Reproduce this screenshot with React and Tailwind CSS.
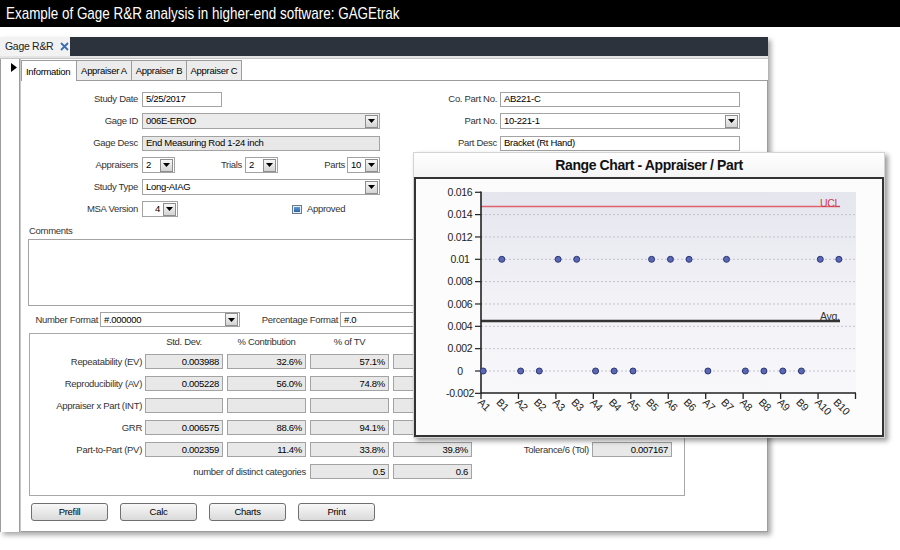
import React from 'react';

const Tri = () => (
  <svg width="7" height="4" viewBox="0 0 7 4"><path d="M0 0H7L3.5 4Z" fill="#000" /></svg>
);

function DropBtn() {
  return (
    <div className="w-[13px] h-[13px] mr-[1px] border border-[#8e8e8e] bg-gradient-to-b from-[#f7f7f7] to-[#d4d4d4] flex items-center justify-center shrink-0">
      <Tri />
    </div>
  );
}

function Field({ cls = '', v = '', grey = false, right = false }) {
  return (
    <div className={`h-[15px] border border-[#a3a3a3] ${grey ? 'bg-[#e8e8e8]' : 'bg-white'} flex items-center px-[3px] ${right ? 'justify-end' : ''} text-black overflow-hidden whitespace-nowrap shrink-0 ${cls}`}>
      {v}
    </div>
  );
}

function Select({ cls = '', v = '', grey = false, right = false }) {
  return (
    <div className={`h-[16px] border border-[#a3a3a3] ${grey ? 'bg-[#ebebeb]' : 'bg-white'} flex items-center shrink-0 ${cls}`}>
      <div className={`flex-1 px-[3px] text-black whitespace-nowrap overflow-hidden ${right ? 'text-right' : ''}`}>{v}</div>
      <DropBtn />
    </div>
  );
}

function Label({ cls = '', children }) {
  return <div className={`text-right text-[#333] whitespace-nowrap shrink-0 ${cls}`}>{children}</div>;
}

function Btn({ children }) {
  return (
    <div className="w-[77px] h-[18px] border border-[#707070] rounded-[3px] bg-gradient-to-b from-[#f8f8f8] to-[#dadada] flex items-center justify-center text-black shrink-0">
      {children}
    </div>
  );
}

const rows = [
  ['Repeatability (EV)', '0.003988', '32.6%', '57.1%'],
  ['Reproducibility (AV)', '0.005228', '56.0%', '74.8%'],
  ['Appraiser x Part (INT)', '', '', ''],
  ['GRR', '0.006575', '88.6%', '94.1%'],
];

function Chart() {
  const yv = (v) => 371 - v * 11170;
  const ticks = [
    [0.016, '0.016'], [0.014, '0.014'], [0.012, '0.012'], [0.01, '0.01'], [0.008, '0.008'],
    [0.006, '0.006'], [0.004, '0.004'], [0.002, '0.002'], [0, '0'], [-0.002, '-0.002'],
  ];
  const vals = [0, 0.01, 0, 0, 0.01, 0.01, 0, 0, 0, 0.01, 0.01, 0.01, 0, 0.01, 0, 0, 0, 0, 0.01, 0.01];
  const tx = (i) => 481 + i * 37.45;
  const pts = [];
  for (let i = 0; i < 10; i++) {
    pts.push({ x: tx(i) + 2.2, v: vals[i * 2], l: 'A' + (i + 1) });
    pts.push({ x: tx(i) + 20.8, v: vals[i * 2 + 1], l: 'B' + (i + 1) });
  }
  return (
    <svg width="466" height="256" className="absolute left-0 top-0" fontFamily="'Liberation Sans', Arial, sans-serif">
      <defs>
        <linearGradient id="pg" x1="0" y1="0" x2="0" y2="1">
          <stop offset="0" stopColor="#e5e5ee" />
          <stop offset="0.5" stopColor="#f1f1f6" />
          <stop offset="1" stopColor="#f8f8fb" />
        </linearGradient>
      </defs>
      <g transform="translate(-416,-179)">
        <rect x="481" y="192" width="375" height="201" fill="url(#pg)" />
        {ticks.slice(1, 9).map(([v]) => (
          <line key={v} x1="481" x2="856" y1={yv(v)} y2={yv(v)} stroke="#c2c2cc" strokeWidth="1" strokeDasharray="2 2" />
        ))}
        {ticks.map(([v, t]) => (
          <g key={t}>
            <text x="460" y={yv(v) + 3.8} fontSize="10.5" textAnchor="middle" fill="#222">{t}</text>
            <line x1="475" x2="481" y1={yv(v)} y2={yv(v)} stroke="#222" strokeWidth="1.2" />
          </g>
        ))}
        <line x1="481" x2="840" y1="206.5" y2="206.5" stroke="#e0606e" strokeWidth="1.6" />
        <text x="820" y="207" fontSize="10.5" fill="#d03c4c">UCL</text>
        <line x1="481" x2="840" y1="321" y2="321" stroke="#333" strokeWidth="2.4" />
        <text x="820" y="319.5" fontSize="10.5" fill="#333">Avg.</text>
        <line x1="481" x2="481" y1="191.5" y2="393.5" stroke="#222" strokeWidth="1.6" />
        <line x1="481" x2="856" y1="393" y2="393" stroke="#222" strokeWidth="1.6" />
        {Array.from({ length: 11 }).map((_, i) => (
          <line key={i} x1={tx(i)} x2={tx(i)} y1="393" y2="399" stroke="#222" strokeWidth="1.3" />
        ))}
        {pts.map((p) => (
          <circle key={p.l} cx={p.x} cy={yv(p.v)} r="3" fill="#5a68b4" stroke="#2c3778" strokeWidth="1" />
        ))}
        {pts.map((p) => (
          <text key={'t' + p.l} x={p.x - 6} y="403" fontSize="10.5" fill="#222" transform={`rotate(45 ${p.x - 6} 403)`}>{p.l}</text>
        ))}
      </g>
    </svg>
  );
}

export default function App() {
  return (
    <div className="w-[900px] h-[550px] bg-white overflow-hidden relative font-['Liberation_Sans',Arial,sans-serif] text-[9.5px] tracking-[-0.3px] leading-none">
      {/* Title bar */}
      <div className="h-[27px] bg-black flex items-center pl-[6px] overflow-hidden">
        <span className="inline-block text-white text-[17px] tracking-normal whitespace-nowrap origin-left scale-x-[0.79]">
          Example of Gage R&amp;R analysis in higher-end software: GAGEtrak
        </span>
      </div>

      {/* Window */}
      <div className="mt-[10px] w-[768px] h-[495px] flex flex-col bg-white shadow-[3px_3px_5px_rgba(0,0,0,0.35)]">
        <div className="h-[19px] bg-[#2d333c] flex items-end shrink-0">
          <div className="h-[19px] w-[70px] bg-[#f2f2f2] flex items-center pl-[5px] gap-[7px] text-[10.5px] text-[#222]">
            <span>Gage R&amp;R</span>
            <svg width="9" height="9" viewBox="0 0 9 9"><path d="M1 1L8 8M8 1L1 8" stroke="#3a6db4" strokeWidth="1.8" /></svg>
          </div>
        </div>
        <div className="h-[3px] bg-[#e4e4e4] border-b border-[#c4c4c4] shrink-0" />
        <div className="flex-1 flex min-h-0">
          {/* gutter */}
          <div className="w-[20px] border-l border-r border-[#9c9c9c] relative shrink-0">
            <svg width="6" height="9" viewBox="0 0 6 9" className="absolute left-[10px] top-[4px]"><path d="M0 0L6 4.5L0 9Z" fill="#000" /></svg>
          </div>
          {/* main */}
          <div className="flex-1 flex flex-col border-l border-[#c8c8c8] min-w-0">
            <div className="h-[22px] flex items-end border-b border-[#9c9c9c] shrink-0">
              <div className="w-[56px] h-[21px] bg-white border border-b-0 border-[#9c9c9c] -mb-px pt-[6px] pl-[4px] text-black relative z-10">Information</div>
              <div className="w-[55px] h-[20px] bg-[#ececec] border border-l-0 border-b-0 border-[#9c9c9c] flex items-center justify-center text-black">Appraiser A</div>
              <div className="w-[55px] h-[20px] bg-[#ececec] border border-l-0 border-b-0 border-[#9c9c9c] flex items-center justify-center text-black">Appraiser B</div>
              <div className="w-[55px] h-[20px] bg-[#ececec] border border-l-0 border-b-0 border-[#9c9c9c] flex items-center justify-center text-black">Appraiser C</div>
            </div>
            <div className="flex-1 border-r border-b border-[#9c9c9c] pt-[10px] flex flex-col">
              {/* top section */}
              <div className="flex">
                <div className="w-[379px] flex flex-col gap-[6px]">
                  <div className="h-[16px] flex items-center">
                    <Label cls="w-[117px]">Study Date</Label>
                    <Field cls="ml-[4px] w-[80px]" v="5/25/2017" />
                  </div>
                  <div className="h-[16px] flex items-center">
                    <Label cls="w-[117px]">Gage ID</Label>
                    <Select cls="ml-[4px] w-[238px]" v="006E-EROD" grey />
                  </div>
                  <div className="h-[16px] flex items-center">
                    <Label cls="w-[117px]">Gage Desc</Label>
                    <Field cls="ml-[4px] w-[238px]" v="End Measuring Rod 1-24 inch" grey />
                  </div>
                  <div className="h-[16px] flex items-center">
                    <Label cls="w-[117px]">Appraisers</Label>
                    <Select cls="ml-[4px] w-[33px]" v="2" />
                    <Label cls="w-[67px]">Trials</Label>
                    <Select cls="ml-[3px] w-[33px]" v="2" />
                    <Label cls="w-[67px]">Parts</Label>
                    <Select cls="ml-[2px] w-[33px]" v="10" />
                  </div>
                  <div className="h-[16px] flex items-center">
                    <Label cls="w-[117px]">Study Type</Label>
                    <Select cls="ml-[4px] w-[238px]" v="Long-AIAG" />
                  </div>
                  <div className="h-[16px] flex items-center">
                    <Label cls="w-[117px]">MSA Version</Label>
                    <Select cls="ml-[4px] w-[36px]" v="4" right />
                    <div className="ml-[114px] w-[10px] h-[9px] border border-[#6a7a8a] bg-[#e8eef4] flex items-center justify-center">
                      <div className="w-[6px] h-[5px] bg-gradient-to-b from-[#5c9ad8] to-[#2a66a8]" />
                    </div>
                    <div className="ml-[5px] text-[#333]">Approved</div>
                  </div>
                </div>
                <div className="flex flex-col gap-[6px]">
                  <div className="h-[16px] flex items-center">
                    <Label cls="w-[97px]">Co. Part No.</Label>
                    <Field cls="ml-[3px] w-[240px]" v="AB221-C" />
                  </div>
                  <div className="h-[16px] flex items-center">
                    <Label cls="w-[97px]">Part No.</Label>
                    <Select cls="ml-[3px] w-[240px]" v="10-221-1" />
                  </div>
                  <div className="h-[16px] flex items-center">
                    <Label cls="w-[97px]">Part Desc</Label>
                    <Field cls="ml-[3px] w-[240px]" v="Bracket (Rt Hand)" />
                  </div>
                </div>
              </div>

              {/* comments */}
              <div className="ml-[8px] mt-[9px] h-[10px] flex items-center text-[#333]">Comments</div>
              <div className="ml-[7px] mt-[3px] w-[712px] h-[67px] border border-[#a3a3a3] bg-white" />

              {/* formats */}
              <div className="mt-[6px] h-[15px] flex items-center">
                <Label cls="ml-[8px] w-[69px]">Number Format</Label>
                <Select cls="ml-[2px] w-[140px] !h-[15px]" v="#.000000" />
                <Label cls="w-[98px]">Percentage Format</Label>
                <Field cls="ml-[2px] w-[200px]" v="#.0" />
              </div>

              {/* results group */}
              <div className="ml-[8px] mt-[6px] w-[656px] h-[163px] border border-[#a8a8a8] flex flex-col">
                <div className="h-[16px] flex items-center text-[#333]">
                  <div className="w-[115px]" />
                  <div className="w-[78px] text-center">Std. Dev.</div>
                  <div className="ml-[4px] w-[79px] text-center">% Contribution</div>
                  <div className="ml-[4px] w-[79px] text-center">% of TV</div>
                </div>
                <div className="mt-[4px] flex flex-col gap-[7px]">
                  {rows.map((r) => (
                    <div key={r[0]} className="h-[15px] flex items-center">
                      <Label cls="w-[112px]">{r[0]}</Label>
                      <Field cls="ml-[3px] w-[78px]" v={r[1]} grey right />
                      <Field cls="ml-[4px] w-[79px]" v={r[2]} grey right />
                      <Field cls="ml-[4px] w-[79px]" v={r[3]} grey right />
                      <Field cls="ml-[4px] w-[79px]" grey right />
                    </div>
                  ))}
                  <div className="h-[15px] flex items-center">
                    <Label cls="w-[112px]">Part-to-Part (PV)</Label>
                    <Field cls="ml-[3px] w-[78px]" v="0.002359" grey right />
                    <Field cls="ml-[4px] w-[79px]" v="11.4%" grey right />
                    <Field cls="ml-[4px] w-[79px]" v="33.8%" grey right />
                    <Field cls="ml-[4px] w-[79px]" v="39.8%" grey right />
                    <Label cls="w-[117px]">Tolerance/6 (Tol)</Label>
                    <Field cls="ml-[3px] w-[80px]" v="0.007167" grey right />
                  </div>
                  <div className="h-[15px] flex items-center">
                    <Label cls="w-[276px]">number of distinct categories</Label>
                    <Field cls="ml-[4px] w-[79px]" v="0.5" grey right />
                    <Field cls="ml-[4px] w-[79px]" v="0.6" grey right />
                  </div>
                </div>
              </div>

              {/* buttons */}
              <div className="ml-[10px] mt-[7px] flex gap-[12px]">
                <Btn>Prefill</Btn>
                <Btn>Calc</Btn>
                <Btn>Charts</Btn>
                <Btn>Print</Btn>
              </div>
            </div>
          </div>
        </div>
      </div>

      {/* Chart overlay */}
      <div className="absolute left-[413px] top-[152px] w-[472px] h-[286px] bg-white border border-[#d4d4d4] shadow-[3px_3px_5px_rgba(0,0,0,0.4)] flex flex-col">
        <div className="h-[24px] shrink-0 flex items-center justify-center bg-gradient-to-b from-white to-[#f4f4f4]">
          <span className="text-[14px] font-bold tracking-[-0.4px] text-[#111]">Range Chart - Appraiser / Part</span>
        </div>
        <div className="flex-1 border-2 border-[#333] bg-[#fcfcfc] relative overflow-hidden">
          <Chart />
        </div>
      </div>
    </div>
  );
}
